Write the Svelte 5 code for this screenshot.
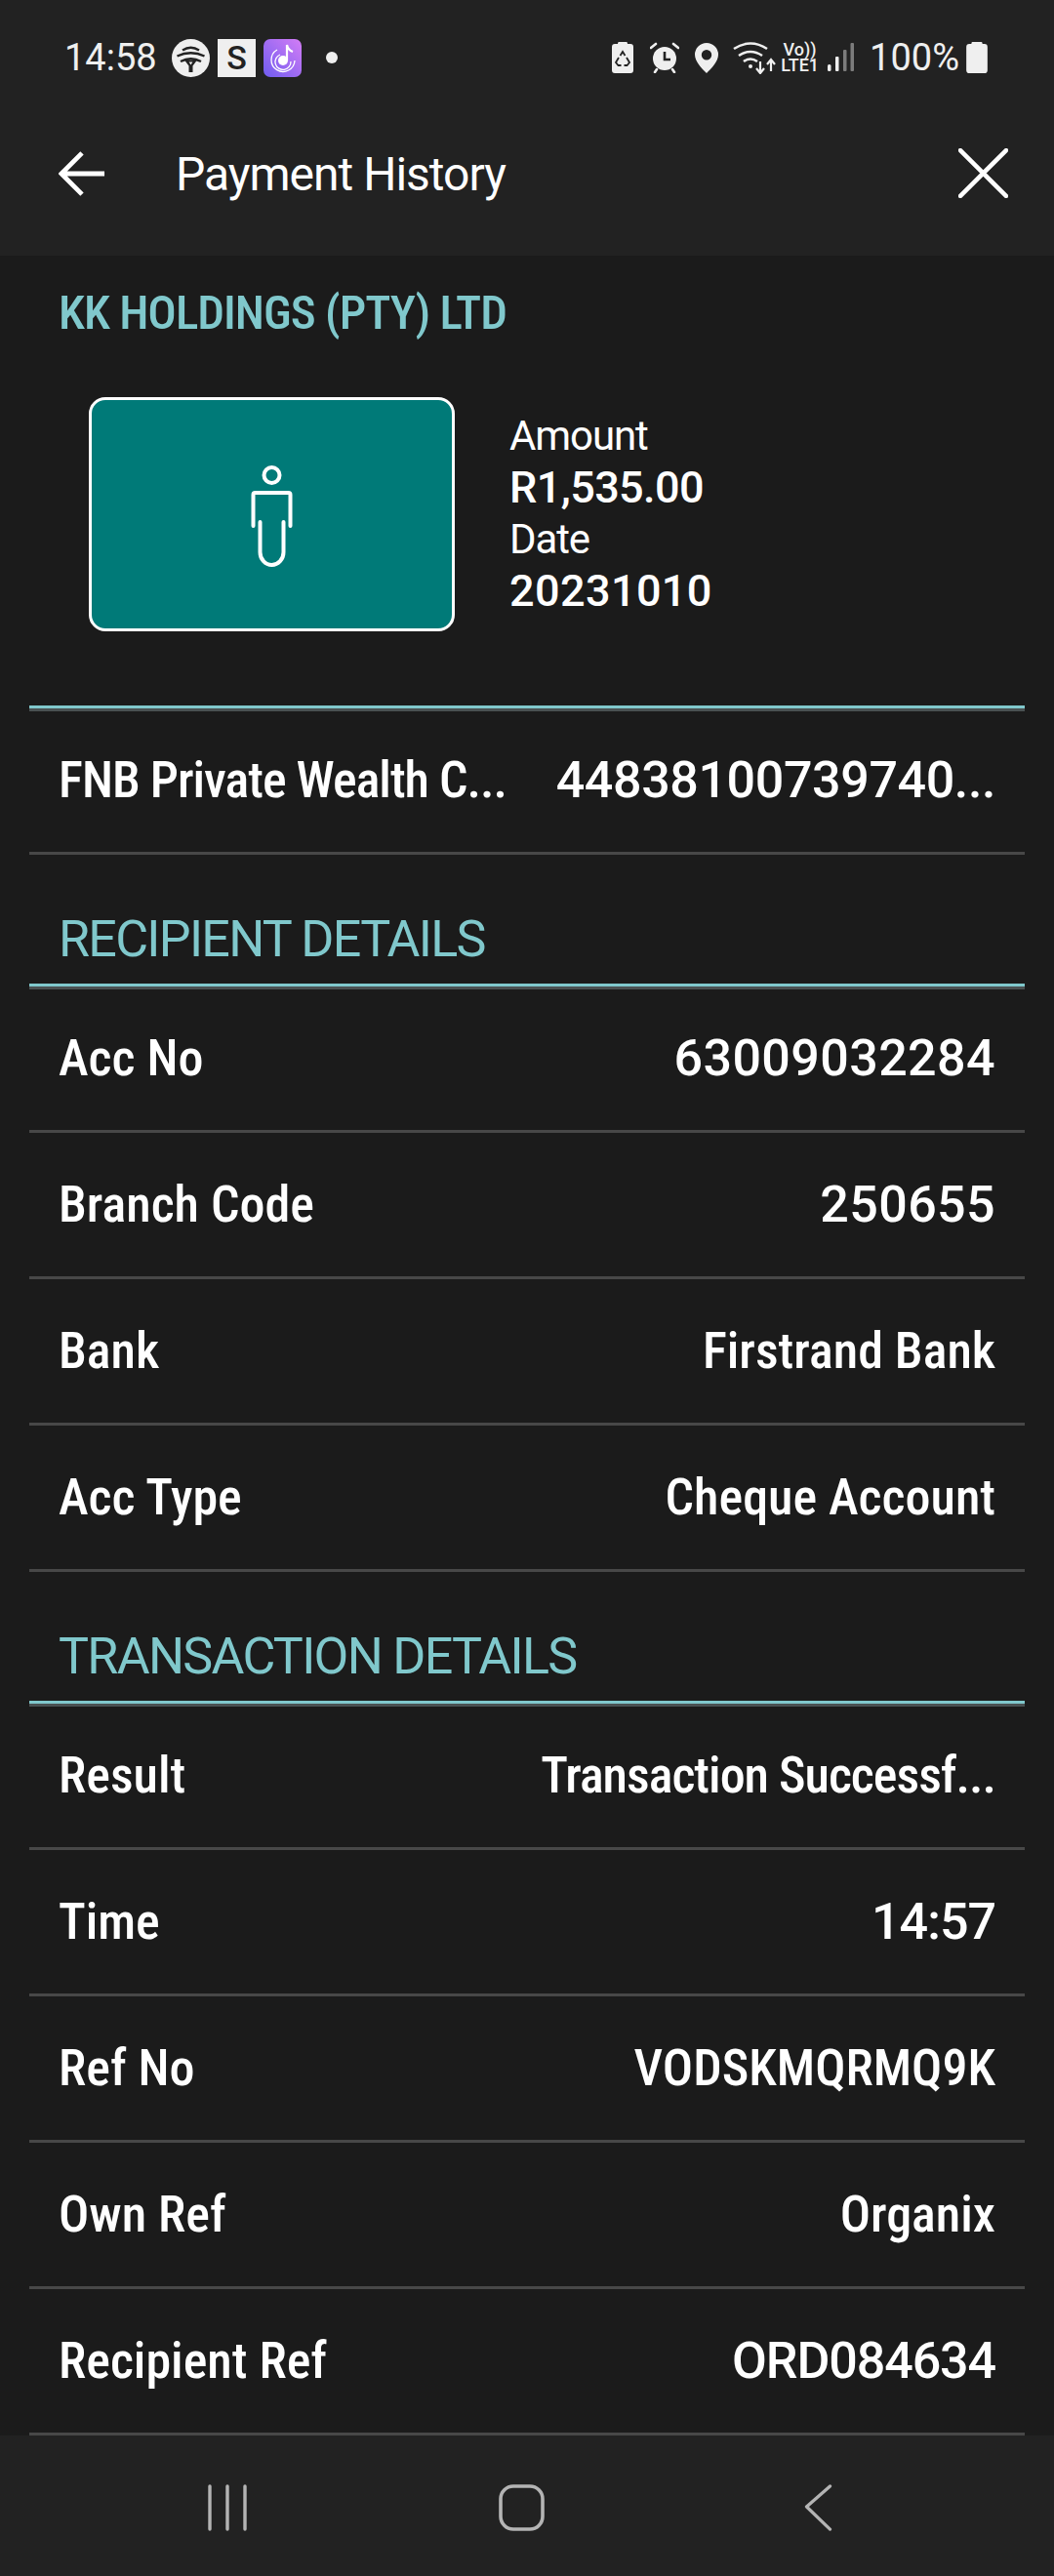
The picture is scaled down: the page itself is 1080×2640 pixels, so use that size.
<script>
  const recipient = [
    ['Acc No', '63009032284', 'num'],
    ['Branch Code', '250655', 'num'],
    ['Bank', 'Firstrand Bank', ''],
    ['Acc Type', 'Cheque Account', '']
  ];
  const transaction = [
    ['Result', 'Transaction Successf...', 'tight'],
    ['Time', '14:57', 'time'],
    ['Ref No', 'VODSKMQRMQ9K', ''],
    ['Own Ref', 'Organix', ''],
    ['Recipient Ref', 'ORD084634', 'mixed']
  ];
</script>

<div class="page">
  <header class="top">
    <div class="status">
      <div class="status-left">
        <span class="clock">14:58</span>
        <svg class="notif" viewBox="0 0 39 39">
          <circle cx="19.5" cy="19.5" r="19.5" fill="#efefef" />
          <path d="M11 11.5Q19.5 6 28 11.5M5.5 17.5Q19.5 11 33.5 17.5M9 23Q19.5 17.5 30 23" stroke="#222" stroke-width="2.4" fill="none" />
          <path d="M13 21.5H26L21.5 27.5V34H17.5V27.5Z" fill="#222" />
          <path d="M17.6 23.5H21.4L19.5 26.5Z" fill="#efefef" />
        </svg>
        <span class="notif s-tile">S</span>
        <svg class="notif" viewBox="0 0 39 39">
          <defs>
            <linearGradient id="music" x1="0" y1="1" x2="1" y2="0">
              <stop offset="0" stop-color="#6f5cf0" />
              <stop offset="1" stop-color="#d47df5" />
            </linearGradient>
          </defs>
          <rect width="39" height="39" rx="7" fill="url(#music)" />
          <circle cx="20" cy="22" r="5" fill="#fff" />
          <path d="M24 22V6Q25 11 30 13" stroke="#fff" stroke-width="2.2" fill="none" />
          <path d="M14 11A12 12 0 1 0 32 22M17 16A8 8 0 1 0 28 23" stroke="#fff" stroke-width="1.3" fill="none" />
        </svg>
        <span class="dot"></span>
      </div>
      <div class="status-right">
        <svg class="sys batt-saver" viewBox="0 0 22 32">
          <path d="M7 0H15Q16 0 16 2H19Q22 2 22 5V29Q22 32 19 32H3Q0 32 0 29V5Q0 2 3 2H6Q6 0 7 0Z" fill="#efefef" />
          <path d="M8.5 14L11 10L13.5 14M15 16L18 21L15.5 24H12.5M9.5 24H6.5L4 21L7 16" stroke="#222" stroke-width="1.8" fill="none" />
        </svg>
        <svg class="sys alarm" viewBox="0 0 30 32">
          <circle cx="15" cy="17" r="12" fill="#efefef" />
          <path d="M1 6L6 2M29 6L24 2M5 31L7 28M25 31L23 28" stroke="#efefef" stroke-width="2.6" stroke-linecap="round" />
          <path d="M15 10V18H21" stroke="#222" stroke-width="2.6" fill="none" />
        </svg>
        <svg class="sys pin" viewBox="0 0 24 31">
          <path fill-rule="evenodd" d="M12 0A12 12 0 0 1 24 12C24 19 17 26 12 31C7 26 0 19 0 12A12 12 0 0 1 12 0ZM12 7A5.2 5.2 0 1 0 12 17.4A5.2 5.2 0 1 0 12 7Z" fill="#efefef" />
        </svg>
        <svg class="sys wifi" viewBox="0 0 44 34">
          <path d="M1 8Q18 -3 35 8M6 15Q18 7 30 15M11 21Q18 16 25 21" stroke="#efefef" stroke-width="2.6" fill="none" />
          <circle cx="18" cy="26" r="2" fill="#efefef" />
          <path d="M28 21V32M24 28L28 33L32 28" stroke="#efefef" stroke-width="2.2" fill="none" />
          <path d="M39 31V20M35 24L39 19L43 24" stroke="#efefef" stroke-width="2.2" fill="none" />
        </svg>
        <span class="volte"><span>Vo))</span><span>LTE1</span></span>
        <svg class="sys signal" viewBox="0 0 27 30">
          <rect x="0" y="22" width="3.5" height="7" rx="1.5" fill="#efefef" />
          <rect x="8" y="14" width="3.5" height="15" rx="1" fill="#efefef" />
          <rect x="16" y="7" width="3.5" height="22" rx="1" fill="#7c7c7c" />
          <rect x="23.5" y="0" width="3.5" height="29" rx="1" fill="#7c7c7c" />
        </svg>
        <span class="pct">100%</span>
        <svg class="sys batt" viewBox="0 0 21 31">
          <path d="M6 0H15Q16 0 16 2H18Q21 2 21 5V28Q21 31 18 31H3Q0 31 0 28V5Q0 2 3 2H5Q5 0 6 0Z" fill="#efefef" />
        </svg>
      </div>
    </div>
    <div class="appbar">
      <svg class="back" viewBox="0 0 50 50">
        <path d="M2 25H49M25 3L3 25L25 47" stroke="#fff" stroke-width="5" fill="none" />
      </svg>
      <span class="title">Payment History</span>
      <svg class="close" viewBox="0 0 50 50">
        <path d="M2 2L48 48M48 2L2 48" stroke="#fff" stroke-width="4.4" stroke-linecap="round" fill="none" />
      </svg>
    </div>
  </header>

  <main class="content">
    <h2 class="payee">KK HOLDINGS (PTY) LTD</h2>
    <div class="summary">
      <div class="card">
        <svg viewBox="0 0 43 104" width="43" height="104">
          <circle cx="21.5" cy="10" r="8" stroke="#fff" stroke-width="4" fill="none" />
          <path d="M2.5 62V30Q2.5 28 4.5 28H38.500Q40.500 28 40.500 30V62" stroke="#fff" stroke-width="4" stroke-linecap="round" fill="none" />
          <path d="M9.500 58V89A12 13 0 0 0 33.500 89V58" stroke="#fff" stroke-width="4" stroke-linecap="round" fill="none" />
        </svg>
      </div>
      <div class="facts">
        <span class="fact-label">Amount</span>
        <span class="fact-value">R1,535.00</span>
        <span class="fact-label">Date</span>
        <span class="fact-value date">20231010</span>
      </div>
    </div>
    <div class="rule"></div>
    <div class="row">
      <span class="key tight">FNB Private Wealth C...</span>
      <span class="val num-long">44838100739740...</span>
    </div>

    <h3 class="section">RECIPIENT DETAILS</h3>
    <div class="rule"></div>
    {#each recipient as [k, v, kind]}
      <div class="row"><span class="key">{k}</span><span class="val {kind}">{v}</span></div>
    {/each}

    <h3 class="section">TRANSACTION DETAILS</h3>
    <div class="rule"></div>
    {#each transaction as [k, v, kind]}
      <div class="row"><span class="key">{k}</span><span class="val {kind}">{v}</span></div>
    {/each}
  </main>

  <nav class="navbar">
    <svg viewBox="0 0 40 48" class="nav-recent">
      <path d="M2 2V46M20 2V46M38 2V46" stroke="#b4b4b4" stroke-width="3.400" stroke-linecap="round" />
    </svg>
    <svg viewBox="0 0 47 48" class="nav-home">
      <rect x="2" y="2" width="43" height="44" rx="13" stroke="#b4b4b4" stroke-width="3.600" fill="none" />
    </svg>
    <svg viewBox="0 0 29 50" class="nav-back">
      <path d="M27 2L2 24L27 48" stroke="#b4b4b4" stroke-width="3.400" stroke-linecap="round" stroke-linejoin="round" fill="none" />
    </svg>
  </nav>
</div>

<style>
  :global(body) {
    margin: 0;
    background: #1b1b1b;
  }

  .page {
    width: 1080px;
    height: 2640px;
    display: flex;
    flex-direction: column;
    overflow: hidden;
    font-family: Roboto, "Liberation Sans", sans-serif;
    color: #fff;
    background: #1b1b1b;
  }

  .top {
    height: 262px;
    flex: none;
    background: #222;
  }

  .status {
    height: 118px;
    box-sizing: border-box;
    padding: 0 0 0 66px;
    display: flex;
    justify-content: space-between;
    align-items: center;
  }

  .status-left,
  .status-right {
    display: flex;
    align-items: center;
  }

  .clock {
    font-size: 38px;
    color: #efefef;
    width: 110px;
  }

  .notif {
    width: 39px;
    height: 39px;
    margin-right: 8px;
  }

  .s-tile {
    background: #efefef;
    color: #222;
    font-size: 34px;
    font-weight: 500;
    text-align: center;
    line-height: 39px;
  }

  .dot {
    width: 12px;
    height: 12px;
    border-radius: 50%;
    background: #efefef;
    margin-left: 17px;
  }

  .status-right {
    padding-right: 68px;
  }

  .sys {
    display: block;
  }

  .batt-saver {
    width: 22px;
    height: 32px;
    margin-right: 17px;
  }

  .alarm {
    width: 30px;
    height: 32px;
    margin-right: 16px;
  }

  .pin {
    width: 24px;
    height: 31px;
    margin-right: 15px;
  }

  .wifi {
    width: 44px;
    height: 34px;
    margin-right: 5px;
  }

  .volte {
    display: flex;
    flex-direction: column;
    align-items: center;
    width: 39px;
    font-size: 18px;
    font-weight: 500;
    line-height: 16px;
    color: #efefef;
    margin-right: 9px;
  }

  .signal {
    width: 27px;
    height: 30px;
    margin-right: 16px;
  }

  .pct {
    font-size: 38px;
    color: #efefef;
    margin-right: 7px;
  }

  .batt {
    width: 22px;
    height: 32px;
  }

  .appbar {
    height: 120px;
    display: flex;
    align-items: center;
    position: relative;
    padding-left: 60px;
  }

  .back {
    width: 48px;
    height: 48px;
    margin-right: 72px;
  }

  .title {
    font-size: 48px;
    letter-spacing: -1px;
  }

  .close {
    width: 51px;
    height: 51px;
    position: absolute;
    right: 47px;
    top: 34px;
  }

  .content {
    flex: 1;
    padding: 0 30px;
    min-height: 0;
  }

  .payee {
    margin: 0;
    height: 116px;
    box-sizing: border-box;
    padding: 0 0 0 30px;
    display: flex;
    align-items: center;
    font-size: 49px;
    font-weight: 500;
    font-stretch: 75%;
    letter-spacing: -1px;
    color: #80c8cc;
    white-space: nowrap;
  }

  .summary {
    height: 345px;
    display: flex;
    box-sizing: border-box;
    padding: 29px 0 0 61px;
  }

  .card {
    width: 375px;
    height: 240px;
    box-sizing: border-box;
    border: 3px solid #fff;
    border-radius: 17px;
    background: #007a78;
    display: flex;
    align-items: center;
    justify-content: center;
  }

  .card svg {
    margin-top: 3px;
  }

  .facts {
    display: flex;
    flex-direction: column;
    margin-left: 56px;
    padding-top: 13px;
  }

  .fact-label {
    font-size: 42px;
    line-height: 53px;
    letter-spacing: -1.100px;
  }

  .fact-value {
    font-size: 45px;
    font-weight: 500;
    line-height: 53px;
    letter-spacing: -0.600px;
  }

  .fact-value.date {
    letter-spacing: 0.400px;
  }

  .rule {
    height: 3px;
    background: #80c8cc;
    box-shadow: 0 3px 0 #4a5152;
  }

  .row {
    height: 150px;
    box-sizing: border-box;
    border-bottom: 3px solid #484848;
    display: flex;
    justify-content: space-between;
    align-items: center;
    padding: 0 30px;
    font-size: 52px;
    font-weight: 500;
    font-stretch: 75%;
    white-space: nowrap;
  }

  .tight {
    letter-spacing: -1px;
  }

  .val.num {
    font-stretch: 100%;
    letter-spacing: 0.4px;
  }

  .val.num-long {
    font-stretch: 100%;
    letter-spacing: -0.4px;
  }

  .val.time {
    letter-spacing: -1px;
    font-stretch: 100%;
  }

  .val.mixed {
    font-stretch: 100%;
    letter-spacing: -1.100px;
  }

  .section {
    margin: 0;
    height: 132px;
    box-sizing: border-box;
    padding: 40px 0 0 30px;
    display: flex;
    align-items: center;
    font-size: 52px;
    font-weight: 400;
    letter-spacing: -1.700px;
    color: #80c8cc;
  }

  .navbar {
    height: 144px;
    flex: none;
    background: #222;
    position: relative;
  }

  .navbar svg {
    position: absolute;
    top: 50px;
    height: 48px;
  }

  .nav-recent {
    left: 213px;
    width: 40px;
  }

  .nav-home {
    left: 511px;
    width: 47px;
  }

  .nav-back {
    left: 824px;
    width: 29px;
  }
</style>
